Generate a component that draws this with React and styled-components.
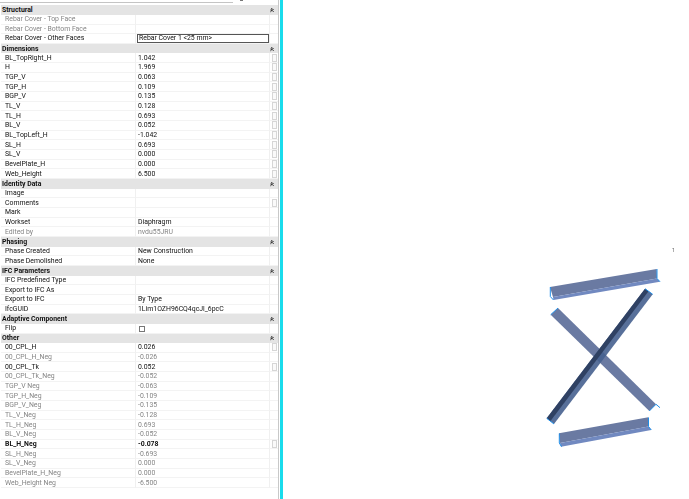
import React from 'react';
import styled, { createGlobalStyle } from 'styled-components';
import { ChevronsUp } from 'lucide-react';

const GlobalStyle = createGlobalStyle`
  html, body {
    margin: 0;
    padding: 0;
    background: #fff;
    overflow: hidden;
  }
`;

const Page = styled.div`
  display: flex;
  width: 689px;
  height: 499px;
  overflow: hidden;
  background: #fff;
  font-family: Roboto, 'Open Sans', sans-serif;
`;

const Panel = styled.div`
  width: 278px;
  flex: none;
  display: flex;
  flex-direction: column;
  border-right: 1px solid #c8c8c8;
`;

const TopStrip = styled.div`
  height: 5.2px;
  flex: none;
  display: flex;
  align-items: flex-start;
  gap: 7px;
`;

const TopRule = styled.div`
  width: 233px;
  height: 1px;
  margin-top: 1.5px;
  background: #c4c4c4;
`;

const TopMark = styled.div`
  width: 3px;
  height: 1px;
  background: #777;
`;

const Table = styled.div`
  display: grid;
  grid-template-columns: 135px 134px 8px;
  grid-auto-rows: 9.67px;
  padding-left: 1px;
  filter: blur(0.2px);
`;

const Header = styled.div`
  grid-column: 1 / -1;
  display: flex;
  align-items: center;
  justify-content: space-between;
  padding: 0 3px 0 1px;
  background: #e4e4e4;
  color: #111;
  font-size: 6.9px;
  font-weight: 700;
  white-space: nowrap;
  overflow: hidden;

  svg {
    color: #111;
  }
`;

const Cell = styled.div`
  display: flex;
  align-items: center;
  min-width: 0;
  overflow: hidden;
  white-space: nowrap;
  font-size: 6.9px;
  font-weight: ${p => (p.$bold ? 700 : 400)};
  color: ${p => (p.$muted ? '#858585' : '#111')};
  border-bottom: 1px solid #f3f3f3;
  border-right: 1px solid #f0f0f0;
`;

const NameCell = styled(Cell)`
  padding-left: 4px;
`;

const ValueCell = styled(Cell)`
  padding-left: 2px;
`;

const ActionCell = styled(Cell)`
  border-right: none;
  justify-content: center;
`;

const LinkBox = styled.span`
  width: 3px;
  height: 6px;
  border: 1px solid #d6d6d6;
  background: #fafafa;
`;

const EditBox = styled.div`
  flex: 1;
  height: 100%;
  box-sizing: border-box;
  display: flex;
  align-items: center;
  padding-left: 1px;
  border: 1px solid #555;
  margin-left: -1px;
  color: #111;
`;

const CheckBox = styled.span`
  width: 4px;
  height: 4px;
  margin: 1px 0 0 1px;
  border: 1px solid #777;
  background: #fff;
`;

const Divider = styled.div`
  width: 1px;
  flex: none;
  background: #fff;
`;

const CyanBand = styled.div`
  width: 3px;
  flex: none;
  background: #19dcec;
`;

const Canvas = styled.div`
  flex: 1;
  min-width: 0;

  svg {
    display: block;
    filter: blur(0.3px);
  }
`;

const sections = [
  { title: 'Structural', rows: [
    { name: 'Rebar Cover - Top Face', muted: true },
    { name: 'Rebar Cover - Bottom Face', muted: true },
    { name: 'Rebar Cover - Other Faces', value: 'Rebar Cover 1 <25 mm>', edit: true },
  ] },
  { title: 'Dimensions', rows: [
    { name: 'BL_TopRight_H', value: '1.042', link: true },
    { name: 'H', value: '1.969', link: true },
    { name: 'TGP_V', value: '0.063', link: true },
    { name: 'TGP_H', value: '0.109', link: true },
    { name: 'BGP_V', value: '0.135', link: true },
    { name: 'TL_V', value: '0.128', link: true },
    { name: 'TL_H', value: '0.693', link: true },
    { name: 'BL_V', value: '0.052', link: true },
    { name: 'BL_TopLeft_H', value: '-1.042', link: true },
    { name: 'SL_H', value: '0.693', link: true },
    { name: 'SL_V', value: '0.000', link: true },
    { name: 'BevelPlate_H', value: '0.000', link: true },
    { name: 'Web_Height', value: '6.500', link: true },
  ] },
  { title: 'Identity Data', rows: [
    { name: 'Image' },
    { name: 'Comments', link: true },
    { name: 'Mark' },
    { name: 'Workset', value: 'Diaphragm' },
    { name: 'Edited by', value: 'nvdu55JRU', muted: true },
  ] },
  { title: 'Phasing', rows: [
    { name: 'Phase Created', value: 'New Construction' },
    { name: 'Phase Demolished', value: 'None' },
  ] },
  { title: 'IFC Parameters', rows: [
    { name: 'IFC Predefined Type' },
    { name: 'Export to IFC As' },
    { name: 'Export to IFC', value: 'By Type' },
    { name: 'IfcGUID', value: '1Lim1OZH96CQ4qcJl_6pcC' },
  ] },
  { title: 'Adaptive Component', rows: [
    { name: 'Flip', check: true },
  ] },
  { title: 'Other', rows: [
    { name: '00_CPL_H', value: '0.026', link: true },
    { name: '00_CPL_H_Neg', value: '-0.026', muted: true },
    { name: '00_CPL_Tk', value: '0.052', link: true },
    { name: '00_CPL_Tk_Neg', value: '-0.052', muted: true },
    { name: 'TGP_V Neg', value: '-0.063', muted: true },
    { name: 'TGP_H_Neg', value: '-0.109', muted: true },
    { name: 'BGP_V_Neg', value: '-0.135', muted: true },
    { name: 'TL_V_Neg', value: '-0.128', muted: true },
    { name: 'TL_H_Neg', value: '0.693', muted: true },
    { name: 'BL_V_Neg', value: '-0.052', muted: true },
    { name: 'BL_H_Neg', value: '-0.078', bold: true, link: true },
    { name: 'SL_H_Neg', value: '-0.693', muted: true },
    { name: 'SL_V_Neg', value: '0.000', muted: true },
    { name: 'BevelPlate_H_Neg', value: '0.000', muted: true },
    { name: 'Web_Height Neg', value: '-6.500', muted: true },
  ] },
];

const Row = ({ row }) => (
  <>
    <NameCell $muted={row.muted} $bold={row.bold}>{row.name}</NameCell>
    <ValueCell $muted={row.muted} $bold={row.bold}>
      {row.edit ? <EditBox>{row.value}</EditBox> : row.check ? <CheckBox /> : row.value}
    </ValueCell>
    <ActionCell>{row.link && <LinkBox />}</ActionCell>
  </>
);

// angle beam, web plus a lighter flange and the blue highlighted end cuts
const Beam = ({ web, flange, cuts }) => (
  <g>
    <polygon points={web} fill="#6a7aa2" />
    <polygon points={flange} fill="#7189c0" />
    {cuts.map(c => (
      <polyline key={c} points={c} fill="none" stroke="#1f8ee8" strokeWidth="1" />
    ))}
  </g>
);

const Members = () => (
  <svg width="406" height="499" viewBox="283 0 406 499">
    <Beam
      web="550,287 656.7,269 657,278.5 553,297"
      flange="553,297 657,278.5 660,281.7 553.5,300"
      cuts={['550.3,287 550.3,296.5 553.5,300', '657,269 657,278.5 660,281.7']}
    />
    <Beam
      web="559,433.3 648.3,417.3 648.5,426.5 560,443"
      flange="560,443 648.5,426.5 651.3,430 561,446.7"
      cuts={['559.3,433.5 559.3,443 561.5,446.7', '648.5,417.5 648.5,426.5 651.3,430']}
    />
    <g>
      <polygon points="550.7,314.7 558,308 656,404.3 649.3,411" fill="#6a7aa2" />
      <polyline points="550.7,314.7 558,308" fill="none" stroke="#1f8ee8" strokeWidth="1" />
      <polyline points="649.3,411 656,404.3 660,407.7" fill="none" stroke="#1f8ee8" strokeWidth="1" />
    </g>
    <g>
      <polygon points="645,288.7 652.7,294.3 554,424 546.7,418.3" fill="#46608f" fillOpacity="0.9" />
      <polygon points="645,288.7 648.5,291.3 550.5,421 546.7,418.3" fill="#2f4163" />
      <polyline points="645,288.7 652.7,294.3" fill="none" stroke="#1f8ee8" strokeWidth="1" />
      <polyline points="546.7,418.3 554,424" fill="none" stroke="#1f8ee8" strokeWidth="1" />
    </g>
    <text x="672" y="252" fontSize="5" fontFamily="Roboto, sans-serif" fill="#555">1</text>
  </svg>
);

export default function App() {
  return (
    <Page>
      <GlobalStyle />
      <Panel>
        <TopStrip>
          <TopRule />
          <TopMark />
        </TopStrip>
        <Table>
          {sections.map(section => (
            <React.Fragment key={section.title}>
              <Header>
                {section.title}
                <ChevronsUp size={6} strokeWidth={4} />
              </Header>
              {section.rows.map(row => <Row key={row.name} row={row} />)}
            </React.Fragment>
          ))}
        </Table>
      </Panel>
      <Divider />
      <CyanBand />
      <Canvas>
        <Members />
      </Canvas>
    </Page>
  );
}
